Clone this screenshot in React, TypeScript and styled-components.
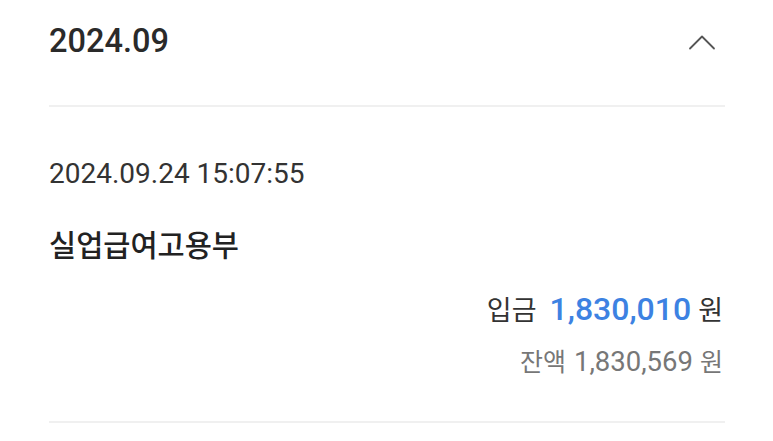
import React from "react";
import styled, { createGlobalStyle } from "styled-components";

const Global = createGlobalStyle`
  html, body { margin: 0; padding: 0; background: #ffffff; }
  body { font-family: Roboto, "Noto Sans CJK KR", sans-serif; -webkit-font-smoothing: antialiased; }
`;

const Page = styled.div`
  width: 773px;
  height: 441px;
  background: #fff;
  padding: 0 48px 0 49px;
  box-sizing: border-box;
  overflow: hidden;
`;

const Header = styled.div`
  height: 107px;
  padding-top: 21px;
  box-sizing: border-box;
  display: flex;
  justify-content: space-between;
  align-items: flex-start;
  border-bottom: 2px solid #f0f0f0;
`;

const Month = styled.div`
  font-family: Roboto, sans-serif;
  font-size: 32.5px;
  font-weight: 500;
  line-height: 40px;
  color: #2a2a2a;
`;

const Toggle = styled.div`
  width: 40px;
  height: 40px;
  margin-top: 1px;
  margin-right: 3px;
  display: flex;
  align-items: center;
  justify-content: center;
`;

const Item = styled.div`
  padding: 49px 0 43px;
  display: flex;
  flex-direction: column;
  border-bottom: 2px solid #f0f0f0;
`;

const DateTime = styled.div`
  font-family: Roboto, sans-serif;
  font-size: 28px;
  line-height: 36px;
  color: #333;
`;

const Title = styled.div`
  margin-top: 31px;
  font-family: "Noto Sans CJK KR", sans-serif;
  font-size: 29.5px;
  font-weight: 500;
  line-height: 40px;
  color: #222;
`;

const AmountRow = styled.div<{ $top: number; $muted?: boolean }>`
  margin-top: ${(p) => p.$top}px;
  display: flex;
  justify-content: flex-end;
  align-items: baseline;
  height: ${(p) => (p.$muted ? 36 : 40)}px;
  line-height: ${(p) => (p.$muted ? 36 : 40)}px;
  color: ${(p) => (p.$muted ? "#777" : "#333")};
`;

const Label = styled.span<{ $size: number; $gap: number }>`
  font-family: "Noto Sans CJK KR", sans-serif;
  font-size: ${(p) => p.$size}px;
  margin-right: ${(p) => p.$gap}px;
`;

const Unit = styled.span<{ $size: number; $gap: number }>`
  font-family: "Noto Sans CJK KR", sans-serif;
  font-size: ${(p) => p.$size}px;
  margin-left: ${(p) => p.$gap}px;
  margin-right: 2px;
`;

const Amount = styled.span<{ $size: number; $accent?: boolean }>`
  font-family: Roboto, sans-serif;
  font-size: ${(p) => p.$size}px;
  font-weight: ${(p) => (p.$accent ? 500 : 400)};
  color: ${(p) => (p.$accent ? "#3d82e2" : "inherit")};
`;

export default function App() {
  return (
    <>
      <Global />
      <Page>
        <Header>
          <Month>2024.09</Month>
          <Toggle>
            <svg width="28" height="15" viewBox="0 0 28 15" fill="none">
              <path d="M2 13.5 L14 1.5 L26 13.5" stroke="#555" strokeWidth="1.8" strokeLinecap="round" strokeLinejoin="round" />
            </svg>
          </Toggle>
        </Header>
        <Item>
          <DateTime>2024.09.24 15:07:55</DateTime>
          <Title>실업급여고용부</Title>
          <AmountRow $top={26}>
            <Label $size={27} $gap={13}>입금</Label>
            <Amount $size={32} $accent>1,830,010</Amount>
            <Unit $size={27} $gap={7}>원</Unit>
          </AmountRow>
          <AmountRow $top={13} $muted>
            <Label $size={25} $gap={8}>잔액</Label>
            <Amount $size={27.5}>1,830,569</Amount>
            <Unit $size={25} $gap={7}>원</Unit>
          </AmountRow>
        </Item>
      </Page>
    </>
  );
}
